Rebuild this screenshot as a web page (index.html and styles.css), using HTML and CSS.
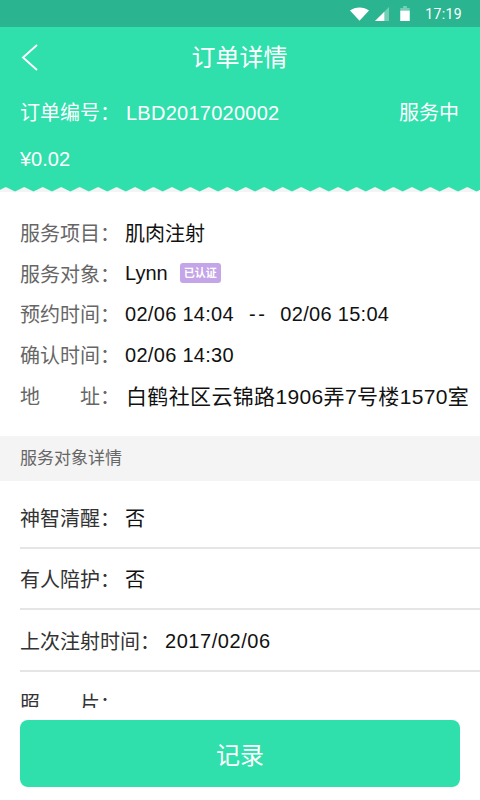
FILE: index.html
```html
<!DOCTYPE html>
<html lang="zh-CN">
<head>
<meta charset="utf-8">
<title>订单详情</title>
<link rel="stylesheet" href="styles.css">
</head>
<body>
<div class="page">
  <div class="status">
    <svg class="ic-wifi" viewBox="0 0 20 14" width="19" height="14"><path d="M0 3.200C5.500-1 14.500-1 20 3.200L10 14z" fill="#fff"/></svg>
    <svg class="ic-signal" viewBox="0 0 15 15" width="14" height="14"><path d="M0 15L15 0V15z" fill="#fff" opacity=".35"/><path d="M0 15L10 5V15z" fill="#fff"/></svg>
    <svg class="ic-batt" viewBox="0 0 10 16" width="10" height="15"><path d="M3 0H7V2H10V16H0V2H3z" fill="#fff" opacity=".35"/><path d="M0 5H10V16H0z" fill="#fff"/></svg>
    <span class="clock">17:19</span>
  </div>
  <header class="head">
    <div class="nav">
      <svg class="back" viewBox="0 0 20 28" width="20" height="28"><path d="M17 2L3 14.500 17 27" fill="none" stroke="#fff" stroke-width="1.900"/></svg>
      <h1 class="title">订单详情</h1>
    </div>
    <div class="order"><span class="order-label">订单编号：</span><span class="order-no">LBD2017020002</span><span class="order-state">服务中</span></div>
    <div class="price">¥0.02</div>
  </header>
  <svg class="zig" width="480" height="5" viewBox="0 0 480 5">
    <defs><pattern id="z" width="18.460" height="5" patternUnits="userSpaceOnUse" patternTransform="translate(5.800 0)"><path d="M0 0H18.460L9.230 4.500z" fill="#2fdfac"/></pattern></defs>
    <rect width="480" height="5" fill="url(#z)"/>
  </svg>
  <main class="scroll">
    <section class="info">
      <div class="row"><span class="k">服务项目：</span><span class="v">肌肉注射</span></div>
      <div class="row"><span class="k">服务对象：</span><span class="v">Lynn</span><span class="badge">已认证</span></div>
      <div class="row"><span class="k">预约时间：</span><span class="v num">02/06 14:04<span class="dash">--</span>02/06 15:04</span></div>
      <div class="row"><span class="k">确认时间：</span><span class="v num">02/06 14:30</span></div>
      <div class="row"><span class="k k-wide">地<i></i>址：</span><span class="v addr">白鹤社区云锦路1906弄7号楼1570室</span></div>
    </section>
    <div class="sec">服务对象详情</div>
    <section class="detail">
      <div class="drow"><span class="k">神智清醒：</span><span class="v">否</span></div>
      <div class="drow"><span class="k">有人陪护：</span><span class="v">否</span></div>
      <div class="drow"><span class="k k-auto">上次注射时间：</span><span class="v num num-wide">2017/02/06</span></div>
      <div class="drow"><span class="k k-wide">照<i></i>片：</span></div>
    </section>
  </main>
  <footer class="foot"><button class="btn">记录</button></footer>
</div>
</body>
</html>
```
FILE: styles.css
```css
* { box-sizing: border-box; }
html, body { margin: 0; padding: 0; }
body { background: #fff; font-family: "Liberation Sans", "Noto Sans CJK SC", sans-serif; font-weight: 400; }
.page { width: 480px; height: 800px; display: flex; flex-direction: column; overflow: hidden; background: #fff; }
.status { height: 27px; background: #2ab48f; display: flex; align-items: center; justify-content: flex-end; padding-right: 18px; color: #fff; flex: none; }
.ic-wifi { margin-right: 6px; }
.ic-signal { margin-right: 11px; margin-top: 1px; }
.ic-batt { margin-right: 15px; }
.clock { font: 14px/1 Roboto, sans-serif; letter-spacing: .4px; }
.head { background: #2fdfac; color: #fff; flex: none; height: 160px; padding: 0 21px 0 20px; }
.nav { height: 62px; position: relative; display: flex; justify-content: center; align-items: center; }
.back { position: absolute; left: 0; top: 16px; }
.title { margin: 0; font-size: 24px; font-weight: 400; line-height: 62px; }
.order { display: flex; font-size: 20px; line-height: 30px; margin-top: 9px; }
.order-label { width: 106px; }
.order-no { flex: 1; letter-spacing: .25px; }
.price { font-size: 20px; line-height: 30px; margin-top: 16px; }
.zig { display: block; flex: none; background: #f4f4f4; }
.scroll { flex: 1; min-height: 0; overflow: hidden; }
.info { padding: 20px 0 21px 20px; }
.row { display: flex; align-items: center; height: 40.700px; font-size: 20px; white-space: nowrap; }
.k { width: 105px; color: #666; flex: none; }
.k-wide { display: flex; }
.k-wide i { width: 40px; }
.k-auto { width: 145px; }
.v { color: #111; }
.num { letter-spacing: .3px; padding-top: 2px; }
.num-wide { letter-spacing: .55px; }
.dash { margin: 0 13px 0 15px; letter-spacing: 2.500px; }
.addr { margin-left: 1px; font-size: 21px; letter-spacing: .35px; }
.badge { margin-left: 12px; background: #c4a5e8; color: #fff; font-size: 11px; font-weight: 700; line-height: 20px; height: 20px; padding: 0 4px; border-radius: 3px; }
.sec { height: 45px; background: #f4f4f4; color: #666; font-size: 17px; line-height: 45px; padding-left: 20px; }
.detail { padding: 6px 0 0 20px; }
.drow { height: 61.500px; display: flex; align-items: center; font-size: 20px; border-bottom: 2px solid #e5e5e5; }
.drow .k { color: #333; }
.drow:last-child { border-bottom: 0; }
.foot { flex: none; height: 92px; padding: 12px 20px 13px; background: #fff; }
.btn { display: block; width: 100%; height: 67px; border: 0; border-radius: 8px; background: #2fdfac; color: #fff; font: 400 24px "Liberation Sans", "Noto Sans CJK SC", sans-serif; }
```
